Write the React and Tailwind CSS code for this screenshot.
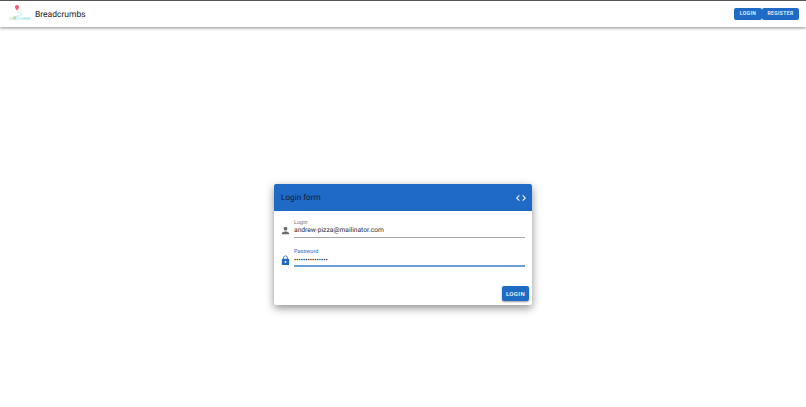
import React from "react";

const PersonIcon = () => (
  <svg viewBox="0 0 24 24" className="w-[11px] h-[11px] fill-[#6b6b6b]">
    <path d="M12 12c2.21 0 4-1.79 4-4s-1.79-4-4-4-4 1.79-4 4 1.79 4 4 4zm0 2c-2.67 0-8 1.34-8 4v2h16v-2c0-2.66-5.33-4-8-4z" />
  </svg>
);

const LockIcon = () => (
  <svg viewBox="0 0 24 24" className="w-[11px] h-[11px] fill-[#1f6ac4]">
    <path d="M18 8h-1V6c0-2.76-2.24-5-5-5S7 3.24 7 6v2H6c-1.1 0-2 .9-2 2v10c0 1.1.9 2 2 2h12c1.1 0 2-.9 2-2V10c0-1.1-.9-2-2-2zm-6 9c-1.1 0-2-.9-2-2s.9-2 2-2 2 .9 2 2-.9 2-2 2zm3.1-9H8.9V6c0-1.71 1.39-3.1 3.1-3.1 1.71 0 3.1 1.39 3.1 3.1v2z" />
  </svg>
);

const CodeIcon = () => (
  <svg viewBox="0 0 24 24" className="w-[12px] h-[12px] fill-white">
    <path d="M9.4 16.6 4.8 12l4.6-4.6L8 6l-6 6 6 6 1.4-1.4zm5.2 0 4.6-4.6-4.6-4.6L16 6l6 6-6 6-1.4-1.4z" />
  </svg>
);

const Logo = () => (
  <svg viewBox="0 0 22 20" className="w-[22px] h-[20px]">
    <path d="M8 1c-1.2 0-2 .9-2 2 0 1.4 2 3.6 2 3.6s2-2.2 2-3.600c0-1.100-.8-2-2-2z" fill="#e8607a" />
    <path d="M8 8c3 .5 5 1 4 3-1 1.500-5 1-7 2" fill="none" stroke="#a8e4e0" strokeWidth="0.8" />
    <rect x="0" y="13" width="22" height="3" fill="#d9f5f3" />
    <rect x="4" y="12.500" width="3" height="3" rx="1" fill="#d8cfa6" />
    <rect x="13" y="14" width="8" height="1" fill="#b0e9f0" />
  </svg>
);

const Field = ({ icon, label, value, active }) => (
  <div className="flex items-end gap-[1px]">
    <div className={`w-[16px] flex justify-center ${active ? "pb-[1px]" : "pb-[2px]"}`}>{icon}</div>
    <div className="flex-1">
      <div className={`text-[5.5px] leading-[7px] ${active ? "text-[#1f6ac4]" : "text-[#777777]"}`}>
        {label}
      </div>
      <div
        className={`h-[11px] flex items-center text-[6.7px] text-[#2b2b2b] ${
          active ? "pb-[1px] border-b-2 border-[#6a9edb]" : "pb-[3px] border-b border-[#a8a8a8]"
        }`}
      >
        {value}
      </div>
    </div>
  </div>
);

const App = () => {
  return (
    <div className="min-h-[407px] bg-white font-['Roboto',sans-serif] antialiased [text-rendering:geometricPrecision]">
      <header className="h-[27px] flex items-center justify-between pl-[9px] pr-[7px] bg-white border-t border-[#555555] shadow-[0_1px_3px_rgba(0,0,0,0.45)]">
        <div className="flex items-center gap-[4px]">
          <Logo />
          <span className="pt-[2px] text-[8.5px] text-[#222222]">Breadcrumbs</span>
        </div>
        <div className="flex">
          <button className="h-[12px] w-[28px] rounded-[2px] bg-[#1f6ac4] text-white text-[5px] font-medium tracking-[0.4px]">
            LOGIN
          </button>
          <button className="h-[12px] w-[37px] rounded-[2px] bg-[#1f6ac4] text-white text-[5px] font-medium tracking-[0.4px]">
            REGISTER
          </button>
        </div>
      </header>

      <main className="pt-[157px]">
        <div className="w-[258px] h-[121px] mx-auto rounded-[2px] bg-white shadow-[0_3px_8px_rgba(0,0,0,0.45)] flex flex-col">
          <div className="h-[27px] flex items-center justify-between pl-[7px] pr-[5px] rounded-t-[2px] bg-[#1f6ac4]">
            <span className="pt-[2px] text-[8.2px] text-[#0f1c33]">Login form</span>
            <CodeIcon />
          </div>
          <div className="pl-[3px] pr-[7px] pt-[9px] flex flex-col gap-[11px]">
            <Field icon={<PersonIcon />} label="Login" value="andrew-pizza@mailinator.com" />
            <Field icon={<LockIcon />} label="Password" value="•••••••••••••••" active />
          </div>
          <div className="flex justify-end mt-auto pr-[3px] pb-[4px]">
            <button className="h-[15px] w-[27px] rounded-[2px] bg-[#1f6ac4] text-white text-[6px] font-medium tracking-[0.4px] shadow-[0_1px_2px_rgba(0,0,0,0.4)]">
              LOGIN
            </button>
          </div>
        </div>
      </main>
    </div>
  );
};

export default App;
